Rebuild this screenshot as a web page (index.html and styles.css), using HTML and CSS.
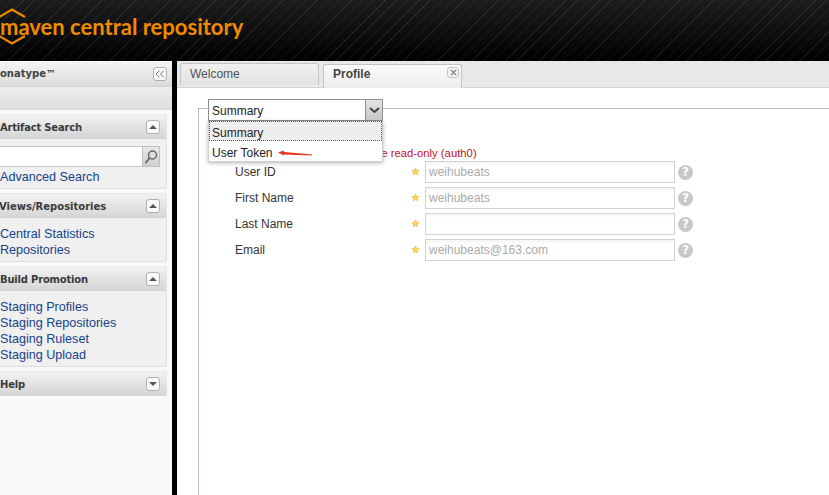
FILE: index.html
```html
<!DOCTYPE html>
<html lang="en">
<head>
<meta charset="utf-8">
<title>Maven Central Repository</title>
<link rel="stylesheet" href="styles.css">
</head>
<body>
<header class="masthead">
  <svg class="logo-mark" width="40" height="40" viewBox="0 0 40 40" aria-hidden="true"><path d="M25 11 L12 3.500 L-1 11 M-1 30 L12 37.500 L25 30" fill="none" stroke="#f08a00" stroke-width="2.200"/></svg>
  <span class="logo-text">maven central repository</span>
</header>
<div class="workspace">
  <aside class="sidebar">
    <div class="side-title"><span class="side-title-text">onatype™</span>
      <span class="tool-btn"><svg width="10" height="8" viewBox="0 0 10 8"><path d="M4.500 .5 L1 4 L4.500 7.500 M9 .5 L5.500 4 L9 7.500" fill="none" stroke="#6d7a89" stroke-width="1"/></svg></span>
    </div>
    <div class="side-sub"></div>
    <section class="panel">
      <div class="panel-head"><span>Artifact Search</span><span class="tool-btn"><i class="tri-up"></i></span></div>
      <div class="panel-body first">
        <div class="search"><span class="search-field"></span><span class="search-btn"><svg width="16" height="16" viewBox="0 0 16 16"><circle cx="9.500" cy="6" r="4" fill="none" stroke="#666" stroke-width="1.500"/><path d="M6.500 9 L2.500 14" stroke="#666" stroke-width="2"/></svg></span></div>
        <a class="side-link">Advanced Search</a>
      </div>
    </section>
    <section class="panel">
      <div class="panel-head"><span class="cut">Views/Repositories</span><span class="tool-btn"><i class="tri-up"></i></span></div>
      <div class="panel-body links"><a class="side-link">Central Statistics</a><a class="side-link">Repositories</a></div>
    </section>
    <section class="panel">
      <div class="panel-head"><span>Build Promotion</span><span class="tool-btn"><i class="tri-up"></i></span></div>
      <div class="panel-body links"><a class="side-link">Staging Profiles</a><a class="side-link">Staging Repositories</a><a class="side-link">Staging Ruleset</a><a class="side-link">Staging Upload</a></div>
    </section>
    <section class="panel">
      <div class="panel-head"><span>Help</span><span class="tool-btn"><i class="tri-down"></i></span></div>
    </section>
  </aside>
  <main class="content">
    <nav class="tabs">
      <div class="tab">Welcome</div>
      <div class="tab tab-active">Profile<span class="tab-close"><svg width="7" height="7" viewBox="0 0 7 7"><path d="M1 1 L6 6 M6 1 L1 6" stroke="#8a8f96" stroke-width="1.500"/></svg></span></div>
    </nav>
    <div class="page">
      <div class="fieldset">
        <p class="notice">Some fields are read-only (auth0)</p>
        <form class="form">
          <label class="f-label">User ID</label><svg class="star" width="9" height="9" viewBox="0 0 9 9" aria-hidden="true"><path d="M4.500 .8 L5.600 3.300 L8.300 3.500 L6.200 5.300 L6.900 8 L4.500 6.600 L2.100 8 L2.800 5.300 L.7 3.500 L3.400 3.300 Z" fill="#fbd75b" stroke="#eeb93a" stroke-width=".6"/></svg><span class="input ro">weihubeats</span><span class="help">?</span>
          <label class="f-label">First Name</label><svg class="star" width="9" height="9" viewBox="0 0 9 9" aria-hidden="true"><path d="M4.500 .8 L5.600 3.300 L8.300 3.500 L6.200 5.300 L6.900 8 L4.500 6.600 L2.100 8 L2.800 5.300 L.7 3.500 L3.400 3.300 Z" fill="#fbd75b" stroke="#eeb93a" stroke-width=".6"/></svg><span class="input ro">weihubeats</span><span class="help">?</span>
          <label class="f-label">Last Name</label><svg class="star" width="9" height="9" viewBox="0 0 9 9" aria-hidden="true"><path d="M4.500 .8 L5.600 3.300 L8.300 3.500 L6.200 5.300 L6.900 8 L4.500 6.600 L2.100 8 L2.800 5.300 L.7 3.500 L3.400 3.300 Z" fill="#fbd75b" stroke="#eeb93a" stroke-width=".6"/></svg><span class="input"></span><span class="help">?</span>
          <label class="f-label">Email</label><svg class="star" width="9" height="9" viewBox="0 0 9 9" aria-hidden="true"><path d="M4.500 .8 L5.600 3.300 L8.300 3.500 L6.200 5.300 L6.900 8 L4.500 6.600 L2.100 8 L2.800 5.300 L.7 3.500 L3.400 3.300 Z" fill="#fbd75b" stroke="#eeb93a" stroke-width=".6"/></svg><span class="input ro">weihubeats@163.com</span><span class="help">?</span>
        </form>
      </div>
      <div class="combo">
        <div class="combo-field"><span class="combo-value">Summary</span><span class="combo-trigger"><svg width="11" height="7" viewBox="0 0 11 7"><path d="M1 1 L5.500 5 L10 1" fill="none" stroke="#444" stroke-width="2"/></svg></span></div>
        <ul class="combo-list">
          <li class="combo-item selected">Summary</li>
          <li class="combo-item">User Token</li>
        </ul>
      </div>
      <svg class="arrow" width="36" height="8" viewBox="0 0 36 8" aria-hidden="true"><path d="M0 2.500 L6 .5 L6 2 L34 4.500 L34 5.500 L6 4.500 L6 5.500 Z" fill="#e8321e"/></svg>
    </div>
  </main>
</div>
</body>
</html>
```
FILE: styles.css
```css
* { box-sizing: border-box; }
html, body { margin: 0; height: 100%; }
body {
  width: 829px; height: 495px; overflow: hidden; background: #000;
  font-family: "Liberation Sans", Arial, sans-serif; font-size: 12px; color: #222;
  display: flex; flex-direction: column;
}
.masthead {
  height: 61px; flex: none; position: relative; display: flex; align-items: center;
  background:
    repeating-linear-gradient(135deg, rgba(255,255,255,.07) 0 1px, transparent 1px 8px),
    linear-gradient(#1c1c1c, #0a0a0a 65%, #000);
}
.logo-mark { position: absolute; left: 0; top: 6px; }
.logo-text {
  font-family: "Lato", sans-serif; font-weight: 700; font-size: 22px; color: #f08a00;
  position: relative; left: 0; top: -4px;
}
.workspace { flex: 1; display: flex; gap: 5px; min-height: 0; }
.sidebar { width: 172px; flex: none; background: #f9f9f9; overflow: hidden; }
.side-title {
  height: 26px; display: flex; align-items: center; justify-content: space-between; padding-right: 5px;
  background: linear-gradient(#f3f3f3, #dcdcdc); font: bold 10px "DejaVu Sans", sans-serif; color: #444;
  border-top: 1px solid #fafafa; border-bottom: 1px solid #d4d4d4;
}
.side-title-text { margin-top: -1px; }
.side-sub { height: 23px; background: linear-gradient(#eeeeee, #dedede); border-bottom: 1px solid #d8d8d8; margin-bottom: 4px; }
.tool-btn {
  width: 14px; height: 14px; border: 1px solid #b0b0b0; border-radius: 3px; background: #fafafa;
  display: flex; align-items: center; justify-content: center; flex: none;
}
.tri-up { border: 4px solid transparent; border-top: 0; border-bottom: 4px solid #555; }
.tri-down { border: 4px solid transparent; border-bottom: 0; border-top: 4px solid #555; }
.panel { width: 167px; margin-bottom: 4px; }
.panel-head {
  height: 25px; display: flex; align-items: center; justify-content: space-between; padding-right: 6px;
  background: linear-gradient(#f2f2f2, #d4d4d4); font: bold 10px "DejaVu Sans", sans-serif; color: #3a3a3a;
  letter-spacing: -.2px;
  border-radius: 0 3px 0 0; border-top: 1px solid #e8e8e8; border-right: 1px solid #e4e4e4;
}
.panel-body {
  background: #f0f0f0; border: solid #dedede; border-width: 0 1px 1px 0; border-radius: 0 0 3px 0;
  display: flex; flex-direction: column;
}
.panel-body.first { padding: 7px 0 3px; }
.panel-body.links { padding: 8px 0 3px; }
.panel-head .cut { margin-left: -1px; letter-spacing: 0; }
.side-link { color: #15428b; font-size: 12.600px; line-height: 16px; display: block; }
.search { display: flex; height: 21px; margin-right: 6px; margin-bottom: 2px; }
.search-field { flex: 1; background: #fff; border: solid #c8c8c8; border-width: 1px 0; }
.search-btn { width: 18px; background: linear-gradient(#e8e8e8, #cfcfcf); border: 1px solid #c0c0c0; display: flex; align-items: center; justify-content: center; }
.content { flex: 1; min-width: 0; display: flex; flex-direction: column; background: #fff; }
.tabs { height: 27px; flex: none; display: flex; align-items: flex-end; gap: 4px; padding-left: 3px; background: #e8e8e8; border-bottom: 1px solid #d2d2d2; }
.tab {
  width: 139px; height: 22px; margin-bottom: 2px; padding: 3px 0 0 9px; font-size: 12px; color: #555;
  background: linear-gradient(#f0f0f0, #e2e2e2); border: 1px solid #c4c4c4; border-bottom: 0; border-radius: 3px 3px 0 0;
}
.tab-active {
  height: 24px; margin-bottom: -1px; padding-top: 2px; font-weight: bold; color: #444; position: relative;
  background: linear-gradient(#fbfbfb, #ececec);
}
.tab-close {
  position: absolute; right: 2px; top: 2px; width: 12px; height: 11px; border: 1px solid #c4c4c4; border-radius: 3px;
  display: flex; align-items: center; justify-content: center; background: #f2f2f2;
}
.page { flex: 1; position: relative; min-height: 0; padding: 20px 0 0 21px; overflow: hidden; }
.fieldset { height: 100%; border: solid #b5b8c8; border-width: 1px 0 0 1px; padding: 37px 0 0 36px; }
.notice { margin: 0 0 0 74px; color: #c0141c; font-size: 11.300px; line-height: 14px; height: 15px; }
.form { display: grid; grid-template-columns: 176px 14px 250px 18px; grid-auto-rows: 22px; row-gap: 4px; align-items: center; width: fit-content; }
.f-label { color: #333; font-size: 12px; }
.star { margin-top: -1px; }
.input {
  height: 22px; border: 1px solid #d2d2d2; padding: 3px 0 0 3px; font-size: 12px; line-height: 15px;
  background: linear-gradient(#f4f4f4, #fff 4px);
}
.input.ro { color: #aaa; }
.help {
  width: 15px; height: 15px; margin-left: 3px; border-radius: 50%; background: #c8c8c8; color: #fff; font: bold 12px/15px "DejaVu Sans", sans-serif; text-align: center;
}
.combo { position: absolute; left: 31px; top: 11px; width: 175px; }
.combo-field { height: 22px; display: flex; background: #fff; border: 1px solid #8e8e8e; }
.combo-value { flex: 1; padding: 4px 0 0 3px; font-size: 12px; color: #222; }
.combo-trigger { width: 17px; background: linear-gradient(#e4e4e4, #c6c6c6); border-left: 1px solid #8e8e8e; display: flex; align-items: center; justify-content: center; }
.combo-list { margin: 0; padding: 0; list-style: none; background: #fff; border: 1px solid #d0d0d0; border-top: 0; box-shadow: 0 1px 4px rgba(0,0,0,.3); }
.combo-item { height: 20px; padding: 5px 0 0 3px; font-size: 12px; color: #222; }
.combo-item.selected { background: #eee; border: 1px dotted #555; padding: 4px 0 0 2px; height: 20px; }
.arrow { position: absolute; left: 101px; top: 62px; }
```
